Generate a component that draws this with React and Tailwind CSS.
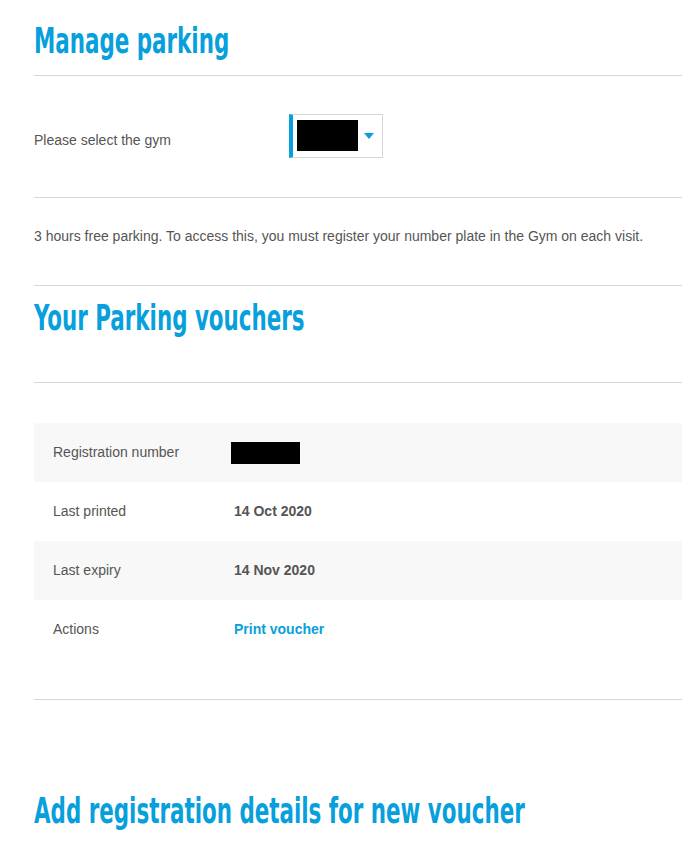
const rows = [
  { label: 'Registration number', value: null },
  { label: 'Last printed', value: '14 Oct 2020' },
  { label: 'Last expiry', value: '14 Nov 2020' },
  { label: 'Actions', value: 'Print voucher', link: true },
];

// condensed display face: narrow DejaVu stretched vertically
const Heading = ({ children }) => (
  <h1 className="origin-top-left scale-y-[1.515] whitespace-nowrap text-[23.8px] font-bold leading-none text-[#089fdd] [font-family:'DejaVu_Sans_Condensed','DejaVu_Sans',sans-serif]">
    {children}
  </h1>
);

export default function App() {
  return (
    <div className="min-h-[856px] bg-white pl-[34px] text-[14px] text-[#555] [font-family:'Liberation_Sans',Arial,sans-serif]">
      {/* Manage parking */}
      <div className="h-[76px] border-b border-[#d6d6d6] pt-[24px]">
        <Heading>Manage parking</Heading>
      </div>

      {/* Gym select */}
      <div className="flex h-[122px] items-center border-b border-[#d6d6d6] pb-[2px]">
        <span className="mt-[10px] w-[255px]">Please select the gym</span>
        <div className="flex h-[44px] w-[94px] items-center border border-l-[4px] border-[#d6d6d6] border-l-[#089fdd] pl-[4px]">
          <div className="h-[31px] w-[61px] bg-black" />
          <svg width="10" height="6" viewBox="0 0 10 6" className="ml-[6px]">
            <path d="M0 0h10L5 6z" fill="#089fdd" />
          </svg>
        </div>
      </div>

      <div className="flex h-[88px] items-center border-b border-[#d6d6d6] pb-[10px]">
        <p>3 hours free parking. To access this, you must register your number plate in the Gym on each visit.</p>
      </div>

      {/* Vouchers */}
      <div className="h-[97px] border-b border-[#d6d6d6] pt-[15px]">
        <Heading>Your Parking vouchers</Heading>
      </div>

      <div className="border-b border-[#d6d6d6] pt-[40px] pb-[40px]">
        {rows.map((r, i) => (
          <div
            key={r.label}
            className={`flex h-[59px] items-center pl-[19px] ${i % 2 === 0 ? 'bg-[#f8f8f8]' : 'bg-white'}`}
          >
            <span className="w-[178px]">{r.label}</span>
            {r.value === null ? (
              <div className="h-[22px] w-[69px] bg-black" />
            ) : (
              <span className={`pl-[3px] font-bold ${r.link ? 'text-[#089fdd]' : 'text-[#555]'}`}>{r.value}</span>
            )}
          </div>
        ))}
      </div>

      <div className="pt-[94px]">
        <Heading>Add registration details for new voucher</Heading>
      </div>
    </div>
  );
}
